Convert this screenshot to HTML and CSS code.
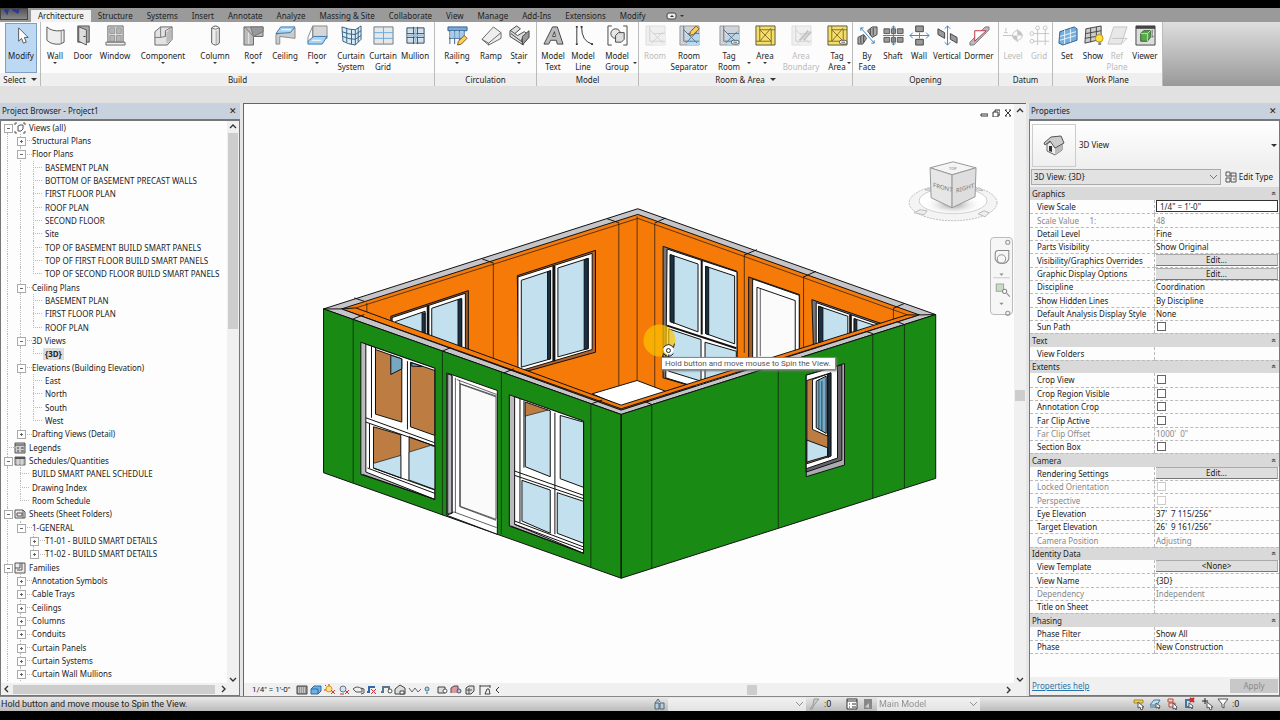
FILE: index.html
```html
<!DOCTYPE html>
<html lang="en">
<head>
<meta charset="utf-8">
<title>Project1 - 3D View</title>
<link rel="stylesheet" href="styles.css">
</head>
<body>
<svg class="defs" aria-hidden="true">
  <symbol id="area" viewBox="0 0 22 22"><path d="M1 1h20v20H1z" fill="#f7de62" stroke="#555"/><path d="M5 5l12 12M17 3L5 17M1 17h16v4M5 1v16M17 5h4M5 5h12v12" stroke="#7d6e35" fill="none"/></symbol>
  <symbol id="room" viewBox="0 0 22 22"><path d="M1 1h20v20H1z" fill="#d0d3da" stroke="#999"/><path d="M9 9h12v12H9z" fill="#b5daef"/><path d="M5 1v16h16M9 9h12M5 5l14 14M19 7L7 19" stroke="#5d7388" fill="none"/></symbol>
  <symbol id="pencil" viewBox="0 0 12 12"><path d="M1 11l1-4 6-6 3 3-6 6z" fill="#ffcf58" stroke="#77551d"/></symbol>
  <symbol id="tag" viewBox="0 0 10 6"><rect x="1" y="1" width="8" height="4" rx="2" fill="#fff" stroke="#555"/><path d="M3 3h4" stroke="#555"/></symbol>
  <symbol id="shaft" viewBox="0 0 22 22"><path d="M1 4h6v5H1zM9 4h4v5H9zM15 4h6v5h-6zM1 13h6v5H1zM9 13h4v5H9zM15 13h6v5h-6z" fill="#999" stroke="#555"/><path d="M11 1v20M0 11h22M9 3l2-2 2 2M9 19l2 2 2-2" stroke="#3f83c5" fill="none"/></symbol>
  <symbol id="chev" viewBox="0 0 8 8"><path d="M1 5l3-3 3 3" fill="none" stroke="#333" stroke-width="1.4"/></symbol>
</svg>

<header class="ribbon">
  <nav class="tabs" aria-label="Ribbon tabs">
    <button class="app" aria-label="Application menu"><svg viewBox="0 0 27 12"><path d="M4 0l2 3 1-3M12 0l5 3 1-3" stroke="#2b3a99" stroke-width="3" fill="none"/></svg></button>
    <button class="on">Architecture</button><button>Structure</button><button>Systems</button><button>Insert</button><button>Annotate</button><button>Analyze</button><button>Massing &amp; Site</button><button>Collaborate</button><button>View</button><button>Manage</button><button>Add-Ins</button><button>Extensions</button><button>Modify</button>
    <button class="mini" aria-label="Minimize ribbon"><svg viewBox="0 0 20 8"><rect x="2" y="1" width="9" height="6" rx="2" fill="#eee" stroke="#444"/><path d="M5 5l2-2 2 2M15 3h4l-2 2z" fill="#333"/></svg></button>
  </nav>
  <div class="panels">
    <section class="panel sel">
      <div class="tools"><button class="t w36 pressed"><svg viewBox="0 0 22 22"><path d="M8 3v14l3-3 2 5 3-1-2-5h4z" fill="#fff" stroke="#555"/></svg>Modify</button></div>
      <h2>Select <i class="dd"></i></h2>
    </section>
    <section class="panel">
      <div class="tools">
        <button class="t w28"><svg viewBox="0 0 22 22"><path d="M2 2q5 5 15 4l3-1v13l-4 2Q7 21 2 16z" fill="#eee" stroke="#555"/><path d="M17 6v13" stroke="#888"/></svg>Wall<i class="dd"></i></button>
        <button class="t w28"><svg viewBox="0 0 22 22"><path d="M5 1h12v17H5z" fill="#aaa" stroke="#555"/><path d="M6 2l8 3v16l-8-4z" fill="#ddd" stroke="#555"/><path d="M11 12h2" stroke="#222"/></svg>Door</button>
        <button class="t w36"><svg viewBox="0 0 22 22"><path d="M3 1h16v17H3z" fill="#ddd" stroke="#666"/><path d="M5 3h5v6H5zM12 3h5v6h-5zM5 11h5v6H5zM12 11h5v6h-5z" fill="#b5b5b5" stroke="#999"/><path d="M1 18h20v3H1z" fill="#eee" stroke="#666"/></svg>Window</button>
        <button class="t w60"><svg viewBox="0 0 22 22"><path d="M2 7l6-5h12v13l-5 6H2z" fill="#e3e3e3" stroke="#666"/><path d="M8 2v11H2M8 13l5-1V6l7-4M13 6v6" fill="none" stroke="#777"/><path d="M14 8l5-5v12l-5 5z" fill="#bbb"/></svg>Component<i class="dd"></i></button>
        <button class="t w44"><svg viewBox="0 0 22 22"><path d="M7 3q4-4 8 0v16q-4 4-8 0z" fill="#eee" stroke="#555"/><path d="M7 3q4 3 8 0" fill="none" stroke="#777"/><path d="M12 6v14" stroke="#bbb" stroke-width="2"/></svg>Column<i class="dd"></i></button>
        <button class="t w32"><svg viewBox="0 0 22 22"><path d="M1 2h20v10H11v9H1z" fill="#bbb" stroke="#666"/><path d="M2 2l9 10M11 12l10-5V2H8z" fill="#999" stroke="#777"/><path d="M6 8v12" stroke="#eee"/></svg>Roof<i class="dd"></i></button>
        <button class="t w32"><svg viewBox="0 0 22 22"><path d="M1 10v10h4v-8l16 2V3z" fill="#ccc" stroke="#888"/><path d="M1 9l5-7h15l-5 6z" fill="#a8d3f2" stroke="#3c79ae"/><path d="M7 5h10" stroke="#fff"/></svg>Ceiling</button>
        <button class="t w32"><svg viewBox="0 0 22 22"><path d="M6 1h15v13H6z" fill="#d6d6d6" stroke="#888"/><path d="M6 1L1 13v5M6 1v12" fill="none" stroke="#888"/><path d="M1 17l6-5h14l-5 8H1z" fill="#a8d3f2" stroke="#3c79ae"/><path d="M5 16h10" stroke="#fff"/></svg>Floor<i class="dd"></i></button>
        <button class="t w36"><svg viewBox="0 0 22 22"><path d="M1 2q7 3 14 3l6-4v14l-6 6Q7 20 2 17z" fill="#d8ebf7" stroke="#35607f"/><path d="M1 7q7 3 14 3l6-4M2 12q6 3 13 3l6-4M6 3v15M11 5v15M15 5v16M18 3v15" fill="none" stroke="#35607f"/></svg>Curtain<br>System</button>
        <button class="t w28"><svg viewBox="0 0 22 22"><path d="M1 2h20v18H1z" fill="#e2e8ec" stroke="#777"/><path d="M11 2v18M1 8h20M1 14h20" stroke="#6fa9d4"/></svg>Curtain<br>Grid</button>
        <button class="t w36"><svg viewBox="0 0 22 22"><path d="M2 3h7v5H2zM13 3h7v5h-7zM2 14h7v5H2zM13 14h7v5h-7z" fill="#d3dde4"/><path d="M2 3h18v16H2zM9 2v18M13 2v18M2 9h18M2 13h18" fill="none" stroke="#2c4c66"/><path d="M11 2v18M2 11h18" stroke="#8fc0e8" stroke-width="2"/></svg>Mullion</button>
      </div>
      <h2>Build</h2>
    </section>
    <section class="panel">
      <div class="tools">
        <button class="t w44"><svg viewBox="0 0 22 22"><path d="M1 2h20v4H1zM3 6v14M8 6v14M13 6v10M18 6v6M2 14h14" fill="#79a9d6" stroke="#315f8d"/><path d="M4 7h14v7H4z" fill="#86b5df" opacity=".7"/><use href="#pencil" x="10" y="10" width="12" height="12"/></svg>Railing<i class="dd"></i></button>
        <button class="t w24"><svg viewBox="0 0 22 22"><path d="M1 15L13 2l8 6v6L8 21z" fill="#eee" stroke="#666"/><path d="M1 15l7 4 13-11M8 19v2" fill="none" stroke="#666"/></svg>Ramp</button>
        <button class="t w32"><svg viewBox="0 0 22 22"><path d="M1 6l7-5 4 3-6 5 3 2 7-4 4 3-7 5 2 6L1 12z" fill="#ddd" stroke="#444"/><path d="M14 21l7-8V6l-7 6z" fill="#999" stroke="#444"/><path d="M2 9l12 9M2 6l4 3" stroke="#444"/></svg>Stair<i class="dd"></i></button>
      </div>
      <h2>Circulation</h2>
    </section>
    <section class="panel">
      <div class="tools">
        <button class="t w32"><svg viewBox="0 0 22 22"><path d="M1 20L10 2h5l6 18h-6l-1-4H8l-2 4z" fill="#bbb" stroke="#444"/><path d="M10 12l2-5 1 5z" fill="#fff" stroke="#444"/></svg>Model<br>Text</button>
        <button class="t w28"><svg viewBox="0 0 22 22"><path d="M4 3v16M9 2q0 15 11 18" fill="none" stroke="#333"/><path d="M3 2h2M3 20h2M8 2h2M19 20h2" stroke="#333" stroke-width="2"/></svg>Model<br>Line</button>
        <button class="t w40"><svg viewBox="0 0 22 22"><path d="M5 1H1v20h4M17 1h4v20h-4" fill="none" stroke="#444"/><circle cx="9" cy="9" r="5" fill="#e6e6e6" stroke="#444"/><path d="M9 11l3-3h6v7l-3 3H9z" fill="#ddd" stroke="#444"/></svg>Model<br>Group<i class="dd side"></i></button>
      </div>
      <h2>Model</h2>
    </section>
    <section class="panel">
      <div class="tools">
        <button class="t w32" disabled><svg viewBox="0 0 22 22"><use href="#room"/></svg>Room</button>
        <button class="t w36"><svg viewBox="0 0 22 22"><use href="#room"/><use href="#pencil" x="10" y="0" width="12" height="12"/></svg>Room<br>Separator</button>
        <button class="t w44"><svg viewBox="0 0 22 22"><use href="#room"/><use href="#tag" x="12" y="15" width="10" height="6"/></svg>Tag<br>Room<i class="dd side"></i></button>
        <button class="t w28"><svg viewBox="0 0 22 22"><use href="#area"/></svg>Area<i class="dd"></i></button>
        <button class="t w44" disabled><svg viewBox="0 0 22 22"><use href="#room"/><path d="M9 16l9-10M13 16l8-9" stroke="#444" stroke-width="2"/></svg>Area<br>Boundary</button>
        <button class="t w28"><svg viewBox="0 0 22 22"><use href="#area"/><use href="#tag" x="12" y="15" width="10" height="6"/></svg>Tag<br>Area<i class="dd side"></i></button>
      </div>
      <h2>Room &amp; Area <i class="dd"></i></h2>
    </section>
    <section class="panel">
      <div class="tools">
        <button class="t w28"><svg viewBox="0 0 22 22"><path d="M11 6l5-4h5v8l-5 3zM1 13l6-3 3 4-4 6H1z" fill="#aaa" stroke="#444"/><path d="M14 4v7M17 3v8M4 12v7M7 11v7" stroke="#444"/><path d="M4 3l14 16M4 6V3h3M18 16v3h-3" stroke="#3f83c5" fill="none"/></svg>By<br>Face</button>
        <button class="t w24"><svg viewBox="0 0 22 22"><use href="#shaft"/></svg>Shaft</button>
        <button class="t w28"><svg viewBox="0 0 22 22"><path d="M7 1h8v6H7zM7 15h8v6H7z" fill="#999" stroke="#444"/><path d="M1 11h20M4 8l-3 3 3 3M18 8l3 3-3 3M11 8v6" stroke="#3f83c5" fill="none"/></svg>Wall</button>
        <button class="t w28"><svg viewBox="0 0 22 22"><path d="M1 4l7 4v6l-7-4zM14 9l7 4v6l-7-4z" fill="#999" stroke="#444"/><path d="M11 1v20M8 4l3-3 3 3M8 18l3 3 3-3" stroke="#3f83c5" fill="none"/></svg>Vertical</button>
        <button class="t w36"><svg viewBox="0 0 22 22"><path d="M1 18L17 2h4v3L5 21H1z" fill="#bbb" stroke="#777"/><path d="M6 6h12L6 17z" fill="#fff" stroke="#b34"/></svg>Dormer</button>
      </div>
      <h2>Opening</h2>
    </section>
    <section class="panel">
      <div class="tools">
        <button class="t w28" disabled><svg viewBox="0 0 22 22"><path d="M0 11h21M15 4v14M3 7v-4M1 8h4" stroke="#444"/><circle cx="15" cy="11" r="5" fill="#fff" stroke="#444"/><path d="M15 6v5h5a5 5 0 0 0-5-5M15 16v-5h-5a5 5 0 0 0 5 5" fill="#444"/></svg>Level</button>
        <button class="t w24" disabled><svg viewBox="0 0 22 22"><path d="M9 4v17M17 4v17M4 9h17M4 17h17" stroke="#444"/><g fill="#fff" stroke="#444"><circle cx="9" cy="3" r="2"/><circle cx="17" cy="3" r="2"/><circle cx="3" cy="9" r="2"/><circle cx="3" cy="17" r="2"/></g></svg>Grid</button>
      </div>
      <h2>Datum</h2>
    </section>
    <section class="panel">
      <div class="tools">
        <button class="t w28"><svg viewBox="0 0 22 22"><path d="M3 7l15-5 3 2v12L6 21l-4-2z" fill="#75b0e0" stroke="#315f8d"/><path d="M3 12l17-5M3 16l17-5M8 5v15M14 4v14" stroke="#e8f4fc"/></svg>Set</button>
        <button class="t w24"><svg viewBox="0 0 22 22"><path d="M3 4l16-3v14L2 19z" fill="#ccc" stroke="#444"/><path d="M3 9l16-3M2 14l17-3M8 3v15M14 2v14" stroke="#444"/><circle cx="17" cy="14" r="4" fill="#ffe13e" stroke="#b88b15"/><path d="M16 18h3v3h-3z" fill="#888"/></svg>Show</button>
        <button class="t w24" disabled><svg viewBox="0 0 22 22"><path d="M7 2h14l-6 18H1z" fill="#bbb" stroke="#444"/><path d="M5 14h16M15 20l6-6" stroke="#444"/></svg>Ref<br>Plane</button>
        <button class="t w32"><svg viewBox="0 0 22 22"><path d="M1 1h20v20H1z" fill="#ddd" stroke="#444"/><path d="M1 1h20v3H1z" fill="#444"/><path d="M6 9l3-3h7v7l-3 4H6z" fill="#59a94a" stroke="#2d5f27"/><path d="M6 9h7v8M13 9l3-3" fill="none" stroke="#b8e3ad"/><path d="M18 5v8l2-2" fill="#fff" stroke="#666"/></svg>Viewer</button>
      </div>
      <h2>Work Plane</h2>
    </section>
    <div class="rest"></div>
  </div>
</header>

<main>
  <aside class="browser">
    <div class="head"><h1>Project Browser - Project1</h1><button aria-label="Close">✕</button></div>
    <div class="frame">
      <div class="cols">
      <ul class="tree">
        <li><button class="m f"></button><svg viewBox="0 0 12 12"><path d="M3 1H1v2M9 1h2v2M3 11H1V9M9 11h2V9" fill="none" stroke="#555"/><path d="M4 4l2-1h3v4l-2 2H4z" fill="none" stroke="#555"/></svg>Views (all)</li>
        <li><i class="v"></i><button class="p"></button><b></b>Structural Plans</li>
        <li><i class="v"></i><button class="m"></button><b></b>Floor Plans</li>
        <li><i class="v"></i><i class="v"></i><i class="t"></i>BASEMENT PLAN</li>
        <li><i class="v"></i><i class="v"></i><i class="t"></i>BOTTOM OF BASEMENT PRECAST WALLS</li>
        <li><i class="v"></i><i class="v"></i><i class="t"></i>FIRST FLOOR PLAN</li>
        <li><i class="v"></i><i class="v"></i><i class="t"></i>ROOF PLAN</li>
        <li><i class="v"></i><i class="v"></i><i class="t"></i>SECOND FLOOR</li>
        <li><i class="v"></i><i class="v"></i><i class="t"></i>Site</li>
        <li><i class="v"></i><i class="v"></i><i class="t"></i>TOP OF BASEMENT BUILD SMART PANELS</li>
        <li><i class="v"></i><i class="v"></i><i class="t"></i>TOP OF FIRST FLOOR BUILD SMART PANELS</li>
        <li><i class="v"></i><i class="v"></i><i class="l"></i>TOP OF SECOND FLOOR BUILD SMART PANELS</li>
        <li><i class="v"></i><button class="m"></button><b></b>Ceiling Plans</li>
        <li><i class="v"></i><i class="v"></i><i class="t"></i>BASEMENT PLAN</li>
        <li><i class="v"></i><i class="v"></i><i class="t"></i>FIRST FLOOR PLAN</li>
        <li><i class="v"></i><i class="v"></i><i class="l"></i>ROOF PLAN</li>
        <li><i class="v"></i><button class="m"></button><b></b>3D Views</li>
        <li><i class="v"></i><i class="v"></i><i class="l"></i><strong>{3D}</strong></li>
        <li><i class="v"></i><button class="m"></button><b></b>Elevations (Building Elevation)</li>
        <li><i class="v"></i><i class="v"></i><i class="t"></i>East</li>
        <li><i class="v"></i><i class="v"></i><i class="t"></i>North</li>
        <li><i class="v"></i><i class="v"></i><i class="t"></i>South</li>
        <li><i class="v"></i><i class="v"></i><i class="l"></i>West</li>
        <li><i class="v"></i><button class="p last"></button><b></b>Drafting Views (Detail)</li>
        <li><i class="t"></i><svg viewBox="0 0 12 12"><path d="M1 1h10v10H1z" fill="#ccc" stroke="#555"/><path d="M1 3h10M3 6h2M7 6h3M3 9h2M7 9h3" stroke="#444"/></svg>Legends</li>
        <li><button class="m"></button><svg viewBox="0 0 12 12"><path d="M1 2h10v8H1z" fill="#bbb" stroke="#666"/><path d="M1 3h10" stroke="#555" stroke-width="2"/><path d="M4 4v6M8 4v6" stroke="#eee"/></svg>Schedules/Quantities</li>
        <li><i class="v"></i><i class="t"></i>BUILD SMART PANEL SCHEDULE</li>
        <li><i class="v"></i><i class="t"></i>Drawing Index</li>
        <li><i class="v"></i><i class="l"></i>Room Schedule</li>
        <li><button class="m"></button><svg viewBox="0 0 12 12"><path d="M1 2h8l2 2v6H1z" fill="#eee" stroke="#555"/><path d="M3 5h5v3H3zM9 2v8" fill="none" stroke="#555"/></svg>Sheets (Sheet Folders)</li>
        <li><i class="v"></i><button class="m last"></button><b></b>1-GENERAL</li>
        <li><i class="v"></i><i></i><button class="p"></button><b></b>T1-01 - BUILD SMART DETAILS</li>
        <li><i class="v"></i><i></i><button class="p last"></button><b></b>T1-02 - BUILD SMART DETAILS</li>
        <li><button class="m"></button><svg viewBox="0 0 12 12"><path d="M1 1h10v10H1z" fill="#eee" stroke="#555"/><path d="M1 6h5V1M8 1v7H3" fill="none" stroke="#555"/></svg>Families</li>
        <li><i class="v"></i><button class="p"></button><b></b>Annotation Symbols</li>
        <li><i class="v"></i><button class="p"></button><b></b>Cable Trays</li>
        <li><i class="v"></i><button class="p"></button><b></b>Ceilings</li>
        <li><i class="v"></i><button class="p"></button><b></b>Columns</li>
        <li><i class="v"></i><button class="p"></button><b></b>Conduits</li>
        <li><i class="v"></i><button class="p"></button><b></b>Curtain Panels</li>
        <li><i class="v"></i><button class="p"></button><b></b>Curtain Systems</li>
        <li><i class="v"></i><button class="p"></button><b></b>Curtain Wall Mullions</li>
      </ul>
      <div class="vbar"><svg viewBox="0 0 8 8"><use href="#chev"/></svg><span class="thumb"></span><svg class="down" viewBox="0 0 8 8"><use href="#chev"/></svg></div>
      </div>
      <div class="hbar"><svg class="left" viewBox="0 0 8 8"><use href="#chev"/></svg><span class="thumb"></span><svg class="right" viewBox="0 0 8 8"><use href="#chev"/></svg></div>
    </div>
  </aside>

  <section class="view">
    <div class="viewrow">
      <div class="canvas">
        <svg class="scene" viewBox="244 105 771 578" role="img" aria-label="3D model of the building">
          <defs><radialGradient id="sh"><stop offset="0" stop-color="#999"/><stop offset="1" stop-color="#fff" stop-opacity="0"/></radialGradient></defs>
          <g transform="translate(311 200) scale(.3333)" stroke="#111" stroke-width="3" stroke-linejoin="round">
            <path d="M38 328L982 27 1877 345 932 645z" fill="#c5c5c9"/>
            <path d="M92 328L982 44 1828 346 932 632z" fill="#f67a08"/>
            <path d="M845 583L980 543 1070 577 932 620z" fill="#fff"/>
            <path d="M135 325L982 56 1795 347M925 70V560M980 50V543M1033 72V563M548 190V500M168 310V345M1302 165V460M1480 230V450M1750 325V370" fill="none" stroke-width="2"/>
            <path d="M130 295L160 305M515 178L548 190M890 57L925 69M1065 55L1033 70M1340 150L1302 166M1517 215L1480 232M1782 312L1750 326" stroke-width="3"/>
            <!-- left inner wall windows -->
            <path d="M240 350L473 273V460L240 530z" fill="#9a5520"/>
            <path d="M244 354L464 281V450L244 520z" fill="#fff"/>
            <path d="M352 318V480" stroke-width="8"/>
            <path d="M254 366L343 335V500L254 515zM363 326L453 296V440L363 465z" fill="#c3e0ee"/>
            <path d="M334 340h9v90h-9zM442 300h11v140l-11 4z" fill="#173247"/>
            <path d="M620 228L855 152V458L625 522z" fill="#b2632b"/>
            <path d="M622 232L845 161V450L622 516z" fill="#fff"/>
            <path d="M730 198V485" stroke-width="9"/>
            <path d="M632 242L720 213V478L632 503zM742 205L833 176V447L742 472z" fill="#c3e0ee"/>
            <path d="M711 217L720 213V478L711 480zM821 180L833 176V447L821 450z" fill="#173247"/>
            <!-- right inner wall openings -->
            <g transform="translate(870 0)">
              <path d="M188 140L410 215V600L188 535z" fill="#77777b"/>
              <path d="M200 148L410 217V600L196 535z" fill="#fff"/>
              <path d="M304 182V405M200 378L408 446" stroke-width="6" fill="none"/>
              <path d="M210 165L293 193V397L210 366zM316 200L403 229V433L316 402zM205 388L302 420V545L205 515zM314 428L408 455V590L314 560z" fill="#c3e0ee"/>
              <path d="M209 165L221 169V371L209 366zM316 200L325 203V406L316 402z" fill="#173247"/>
              <path d="M445 232L598 285V480H445z" fill="#a65b23"/>
              <path d="M457 238L597 287V480H457z" fill="#fff"/>
              <path d="M470 263L585 303V480H470z" fill="#fbfbfb"/><path d="M480 268V470" stroke-width="2"/>
              <path d="M635 300L850 374V450H640z" fill="#77777b"/>
              <path d="M648 309L840 376V450H648z" fill="#fff"/>
              <path d="M655 320L743 350V440H655zM762 357L825 378V440H762z" fill="#c3e0ee"/>
              <path d="M655 320L668 324V440H655zM762 357L770 360V440H762z" fill="#173247"/><path d="M751 346V420" stroke-width="8"/>
            </g>
            <!-- front walls -->
            <path d="M92 328L932 628 1828 346 1790 346 932 617 135 325z" fill="#f67a08"/>
            <path d="M38 328L92 328 932 632 1828 346 1877 345 932 645z" fill="#c5c5c9"/>
            <path d="M38 328L932 645V1137L38 820zM932 645L1877 345V837L932 1137z" fill="#198b14"/>
            <path d="M127 358V850M395 455V948M572 520V1005M841 612V1105M1024 617V1107M1404 497V986M1688 402V896M1783 375V866" fill="none" stroke-width="2"/>
            <path d="M127 358L160 345M395 455L420 444M580 520L610 508M845 612L875 602M1024 615L1000 605M1688 402L1665 395M1783 375L1760 366"/>
            <!-- first front window -->
            <path d="M150 428L372 506V900L150 825z" fill="#bbbbbf"/>
            <path d="M165 434L372 506V900L165 818z" fill="#fff"/>
            <path d="M194 450L273 478V668L194 644zM299 488L372 513V708L299 682zM188 682L270 706V836L188 806zM295 712L372 740V870L295 842z" fill="#bd7d42"/>
            <path d="M188 792L270 768V836L188 806zM295 758L360 738 372 742V870L295 842z" fill="#c3e0ee" stroke-width="2"/>
            <path d="M240 467L273 478V508L240 525zM303 490L335 501 303 500z" fill="#76a8c2"/>
            <path d="M182 440V655M194 445V644M165 655L372 730M165 668L372 740M290 485V690M170 806L372 882M176 673V806M188 806L372 872M155 825L372 900" fill="none"/>
            <!-- front door -->
            <path d="M408 520L560 573V1005L408 948z" fill="#fff"/>
            <path d="M411 523L424 528V942L411 946z" fill="#bbbbbf"/>
            <path d="M434 535V940M447 543V922L556 963M438 540L558 585M447 552L558 590M410 944L430 938 558 985M424 528V942" fill="none" stroke-width="2"/>
            <path d="M449 554L556 592V960L449 921z" fill="#fafafa" stroke-width="2"/>
            <!-- second front window -->
            <path d="M596 586L819 665V1062L596 980z" fill="#bbbbbf"/>
            <path d="M612 592L819 665V1062L612 975z" fill="#fff"/>
            <path d="M644 608L719 634V832L644 802zM749 648L819 668V864L749 838zM634 843L719 872V1002L634 965zM740 880L819 906V1032L740 1002z" fill="#c3e0ee"/>
            <path d="M644 608L712 632 644 650z" fill="#bd7d42" stroke-width="2"/>
            <path d="M628 598V970M640 604V805M612 815L819 888M612 828L819 898M733 640V1005M612 965L819 1043M612 975L819 1052M600 980L819 1062" fill="none"/>
            <!-- side window -->
            <g transform="translate(870 0)">
              <path d="M618 527L733 492V797L618 832z" fill="#aaaab0"/>
              <path d="M618 527L725 496V782L618 818z" fill="#66666a"/>
              <path d="M618 527L712 500V776L618 808z" fill="#fff"/>
              <path d="M620 543L692 520V770L620 793z" fill="#bd7d42"/>
              <path d="M620 722L682 745V770L620 788z" fill="#c3e0ee"/>
              <path d="M637 540L682 524V710L637 690z" fill="#fff"/>
              <path d="M648 545L678 530V702L648 685z" fill="#72aaca"/>
              <path d="M656 540V690M665 545V695" stroke-width="2"/>
              <path d="M683 524L692 520V770L683 774z" fill="#173247"/>
            </g>
          </g>
          <circle cx="660" cy="341" r="16" fill="#fdc400" opacity=".7"/>
          <circle cx="669" cy="350" r="5" fill="#fff"/>
          <g fill="none" stroke="#222"><circle cx="669" cy="351" r="2"/><path d="M664 348q5-6 10 0l1-4M674 354q-5 6-10 0l-1 4"/></g>
          <!-- view cube -->
          <ellipse cx="954" cy="203" rx="44" ry="18" fill="#f4f4f4" stroke="#bbb" stroke-dasharray="2 1"/>
          <ellipse cx="954" cy="201" rx="34" ry="13" fill="#fff" stroke="#ccc"/>
          <ellipse cx="954" cy="205" rx="30" ry="11" fill="url(#sh)"/>
          <g fill="#eee" stroke="#bbb"><path d="M915 213l6-3 7 1-3 4zM979 214l6-3 5 2-4 4zM926 190l6-2 2 3zM976 190l4-2 4 3z"/></g>
          <g stroke="#999" stroke-linejoin="round"><path d="M931 168L954 162 977 168 953 175z" fill="#f4f4f4"/><path d="M931 168L953 175V208L932 198z" fill="#e6e6e6"/><path d="M953 175L977 168 976 197 953 208z" fill="#dedede"/></g>
          <text class="cube" transform="translate(934 187) skewY(16)">FRONT</text>
          <text class="cube" transform="translate(957 193) skewY(-16)">RIGHT</text>
          <text class="cube top" x="950" y="170">TOP</text>
        </svg>
        <div class="winbtns"><button aria-label="Minimize"><svg viewBox="0 0 8 8"><path d="M1 5h7v2H1z" fill="none" stroke="#333"/></svg></button><button aria-label="Restore"><svg viewBox="0 0 8 8"><path d="M1 3h5v5H1zM3 3V1h5v5H6" fill="none" stroke="#333"/></svg></button><button aria-label="Close view"><svg viewBox="0 0 8 8"><path d="M1 1l6 6M7 1L1 7M1 1h2M5 1h2M1 7h2M5 7h2" fill="none" stroke="#333"/></svg></button></div>
        <div class="navbar">
          <svg viewBox="0 0 22 78"><g fill="none" stroke="#999"><circle cx="17" cy="5" r="2"/><circle cx="17" cy="73" r="2"/><path d="M5 16q0-3 3-3h10v8a7 7 0 0 1-13 0z" stroke="#888"/><circle cx="11" cy="21" r="4"/><path d="M3 39h16" stroke="#ccc"/></g><path d="M9 35h4l-2 2zM9 63h4l-2 2z" fill="#888"/><path d="M6 45h7v7H6z" fill="#c9dcc4" stroke="#9a9"/><circle cx="14" cy="52" r="2" fill="#fff" stroke="#888"/><path d="M16 54l3 3" stroke="#888"/></svg>
        </div>
        <div class="tip" role="tooltip">Hold button and move mouse to Spin the View.</div>
      </div>
      <div class="vbar big"><svg viewBox="0 0 8 8"><use href="#chev"/></svg><span class="thumb"></span><svg class="down" viewBox="0 0 8 8"><use href="#chev"/></svg></div>
    </div>
    <div class="viewctl">
      <span class="scale">1/4" = 1'-0"</span>
      <svg class="vicons" viewBox="0 0 206 12">
        <path d="M1 2h10v8H1z" fill="#999" stroke="#444"/><path d="M2 4h8M2 6h8M2 8h8" stroke="#eee" stroke-dasharray="1 1"/>
        <path d="M15 5l3-3h7v5l-3 3h-7z" fill="#6fb1e5" stroke="#2d6a9c"/><path d="M15 5h7v5" fill="none" stroke="#2d6a9c"/>
        <circle cx="33" cy="5" r="3" fill="#ffe08a" stroke="#d99a1c"/><path d="M29 1l1 1M33 0v2M28 6h2M35 6l4 4M39 6l-4 4" stroke="#c33"/>
        <circle cx="47" cy="5" r="3" fill="#cfe3f3" stroke="#678"/><path d="M44 10h4M49 6l4 4M53 6l-4 4" stroke="#c33"/>
        <path d="M57 5q4-4 9 0v3h-6zM65 4l3 1v4l-3 1" fill="#eee" stroke="#555"/>
        <path d="M71 8h2V3h6" fill="none" stroke="#36a" stroke-width="2"/><path d="M75 5l5 5M80 5l-5 5" stroke="#c33"/>
        <path d="M85 8h2V3h6v6" fill="none" stroke="#578" stroke-width="2"/><circle cx="94" cy="7" r="2" fill="#fff" stroke="#555"/>
        <path d="M99 5l5-4 5 3v6H99z" fill="#ddd" stroke="#444"/><path d="M104 7h4v3h-4z" fill="#fff" stroke="#444"/>
        <path d="M113 4l3 4 3-4 3 4 3-3" fill="none" stroke="#666"/>
        <circle cx="131" cy="5" r="2" fill="#a9d4f5" stroke="#478"/><path d="M130 9h2" stroke="#555"/>
        <path d="M142 3h7v6h-7z" fill="#ddd" stroke="#444"/><circle cx="149" cy="7" r="2" fill="#fff" stroke="#555"/>
        <path d="M155 9V4l3-2h4v7" fill="#d99" stroke="#546"/><circle cx="163" cy="7" r="2" fill="#bcd" stroke="#456"/>
        <path d="M170 4l3-2h5v5l-3 3h-5z" fill="#ddd" stroke="#444"/><path d="M173 4v6M170 6h6" stroke="#555"/>
        <path d="M184 1v10M184 2h10M194 1v3M189 10l2-5h2l1 5z" fill="none" stroke="#444"/>
        <path d="M203 3l-3 3 3 3" fill="none" stroke="#333"/>
      </svg>
      <div class="htrack"><span class="thumb"></span><svg class="right" viewBox="0 0 8 8"><use href="#chev"/></svg></div>
    </div>
  </section>

  <aside class="props">
    <div class="head"><h1>Properties</h1><button aria-label="Close">✕</button></div>
    <div class="frame">
      <button class="type"><span class="thumbbox"><svg viewBox="0 0 22 22"><path d="M4 10v7l8 4 7-5V9l-9-3z" fill="#eee" stroke="#666"/><path d="M12 21v-8l7-4v7z" fill="#bbb"/><path d="M1 9l7-6 10-1 3 7-9 5-5-7-5 4z" fill="#ccc" stroke="#555"/><path d="M6 12h3v6l-3-1z" fill="#333"/></svg></span>3D View<i class="dd"></i></button>
      <div class="pick">
        <select aria-label="Element filter"><option>3D View: {3D}</option></select>
        <button class="edit"><svg viewBox="0 0 12 12"><path d="M1 1h4v4H1zM1 7h4v4H1zM6 2h5v9H6zM6 5h5M8 8h2" fill="none" stroke="#555"/></svg>Edit Type</button>
      </div>
      <table>
        <tbody>
        <tr class="g"><th colspan="2">Graphics<span>»</span></th></tr>
        <tr><th><label for="vs">View Scale</label></th><td><input id="vs" class="scalebox" value="1/4&quot; = 1'-0&quot;"></td></tr>
        <tr class="x"><th>Scale Value &nbsp; &nbsp; 1:</th><td>48</td></tr>
        <tr><th>Detail Level</th><td>Fine</td></tr>
        <tr><th>Parts Visibility</th><td>Show Original</td></tr>
        <tr><th>Visibility/Graphics Overrides</th><td><button>Edit...</button></td></tr>
        <tr><th>Graphic Display Options</th><td><button>Edit...</button></td></tr>
        <tr><th>Discipline</th><td>Coordination</td></tr>
        <tr><th>Show Hidden Lines</th><td>By Discipline</td></tr>
        <tr><th>Default Analysis Display Style</th><td>None</td></tr>
        <tr><th><label for="c1">Sun Path</label></th><td><input type="checkbox" id="c1"></td></tr>
        <tr class="g"><th colspan="2">Text<span>»</span></th></tr>
        <tr><th>View Folders</th><td></td></tr>
        <tr class="g"><th colspan="2">Extents<span>»</span></th></tr>
        <tr><th><label for="c2">Crop View</label></th><td><input type="checkbox" id="c2"></td></tr>
        <tr><th><label for="c3">Crop Region Visible</label></th><td><input type="checkbox" id="c3"></td></tr>
        <tr><th><label for="c4">Annotation Crop</label></th><td><input type="checkbox" id="c4"></td></tr>
        <tr><th><label for="c5">Far Clip Active</label></th><td><input type="checkbox" id="c5"></td></tr>
        <tr class="x"><th>Far Clip Offset</th><td>1000' &nbsp;0"</td></tr>
        <tr><th><label for="c6">Section Box</label></th><td><input type="checkbox" id="c6"></td></tr>
        <tr class="g"><th colspan="2">Camera<span>»</span></th></tr>
        <tr><th>Rendering Settings</th><td><button>Edit...</button></td></tr>
        <tr class="x"><th><label for="c7">Locked Orientation</label></th><td><input type="checkbox" id="c7" disabled></td></tr>
        <tr class="x"><th><label for="c8">Perspective</label></th><td><input type="checkbox" id="c8" disabled></td></tr>
        <tr><th>Eye Elevation</th><td>37' &nbsp;7 115/256"</td></tr>
        <tr><th>Target Elevation</th><td>26' &nbsp;9 161/256"</td></tr>
        <tr class="x"><th>Camera Position</th><td>Adjusting</td></tr>
        <tr class="g"><th colspan="2">Identity Data<span>»</span></th></tr>
        <tr><th>View Template</th><td><button>&lt;None&gt;</button></td></tr>
        <tr><th>View Name</th><td>{3D}</td></tr>
        <tr class="x"><th>Dependency</th><td>Independent</td></tr>
        <tr><th>Title on Sheet</th><td></td></tr>
        <tr class="g"><th colspan="2">Phasing<span>»</span></th></tr>
        <tr><th>Phase Filter</th><td>Show All</td></tr>
        <tr><th>Phase</th><td>New Construction</td></tr>
        </tbody>
      </table>
      <div class="foot"><a href="#help">Properties help</a><button disabled>Apply</button></div>
    </div>
  </aside>
</main>

<footer class="status">
  <span class="msg">Hold button and move mouse to Spin the View.</span>
  <div class="mid">
    <svg class="i14" viewBox="0 0 14 12"><path d="M3 5l3-4 2 3M8 5h4v6H8zM3 5h4v6H3z" fill="#bcd" stroke="#4a6a70"/></svg>
    <select class="ws" aria-label="Active workset" disabled><option></option></select>
    <svg class="i14" viewBox="0 0 14 12"><path d="M6 1h5l-5 6-2 4H2l3-4z" fill="#ccc" stroke="#999"/></svg>
    <span class="zero">:0</span>
    <svg class="i14" viewBox="0 0 14 12"><path d="M2 1h10v10H2zM2 3h10M4 6h1M7 6h4M4 9h1M7 9h4" fill="#fff" stroke="#333"/></svg>
    <svg class="i14" viewBox="0 0 14 12"><path d="M3 1h8v10H3z" fill="#888"/><path d="M4 9l4-4v5" fill="#ccc"/></svg>
    <select class="mm" aria-label="Design option" disabled><option>Main Model</option></select>
  </div>
  <div class="end">
    <svg class="i106" viewBox="0 0 100 14">
      <path d="M2 3h9v3H2z" fill="#f2d34f" stroke="#a58a1e"/>
      <path d="M18 8l4-5h6l-3 5zM18 10h8" fill="#bfe0f5" stroke="#47789c"/>
      <path d="M36 2h5v3h-5zM37 6h6v4h-6z" fill="#f6d5cf" stroke="#b34a3c"/>
      <path d="M60 10h-6V3h4" fill="none" stroke="#3c78ad" stroke-width="2"/><path d="M58 1l4 4M62 1l-4 4" stroke="#c22" stroke-width="2"/>
      <path d="M73 1v6M70 4h6" stroke="#222"/>
      <g fill="#fff" stroke="#555"><path d="M6 5v6l2-1 1 3 2-1-1-2h2zM24 6v5l2-1 1 2 1-3zM41 6v6l2-1 1 2 1-3zM57 6v5l2-1 1 2 1-3zM75 5v6l2-1 1 3 2-1-1-2h2z"/><path d="M86 2h10l-4 5v4l-2-1V7z"/></g>
    </svg><span class="zero">:0</span>
  </div>
</footer>
</body>
</html>
```
FILE: styles.css
```css
*{box-sizing:border-box}
body{margin:0;min-height:100vh;display:flex;flex-direction:column;padding:8px 0 9px;background:#000;font:8px/12px "Noto Sans","Open Sans",sans-serif;color:#222}
button,input,select{font:inherit;color:inherit;margin:0;padding:0;border:0;background:none;border-radius:0}
h1,h2{margin:0;font-weight:400;font-size:8px}
.defs{position:absolute;width:0;height:0}
svg{display:block;flex:none}

/* ribbon */
.ribbon{background:#e1e1e1;padding-bottom:17px}
.tabs{display:flex;height:14px;background:#9a9a9a}
.tabs button{height:12px;margin-top:2px;padding:0 7px;line-height:12px}
.tabs .app{width:28px;height:12px;margin:0 3px 0 0;padding:0;background:linear-gradient(#555,#888);border:1px solid #444}
.tabs .on{background:#f1f1f1}
.tabs .mini{padding:0;margin-left:12px}
.mini svg{width:20px;height:8px}
.panels{display:flex;height:64px}
.panel{display:flex;flex-direction:column;border-right:1px solid #bbb;background:#fcfcfd;flex:none}
.tools{display:flex;flex:1;padding:1px 1px 0 0}
.panel h2{height:13px;line-height:13px;background:#efefef;text-align:center}
.panel h2 .dd{display:inline-block;vertical-align:2px;margin-left:3px;border-width:3px 3px 0}
.sel .tools{padding:1px 3px 0 5px}
.t{position:relative;display:flex;flex-direction:column;align-items:center;line-height:11px;white-space:nowrap;padding-top:2px}
.t svg{width:21px;height:21px;margin-bottom:4px}
.t:disabled{color:#bbb}
.t:disabled svg{opacity:.3;filter:grayscale(1)}
.t .dd{margin-top:1px}
.t .side{position:absolute;right:0;bottom:9px}
.pressed{background:#bcd8f3;border:1px solid #7d9fc4;padding-top:1px}
.dd{width:0;height:0;border:solid transparent;border-width:2px 2px 0;border-top-color:#333}
.w24{width:24px}.w28{width:28px}.w32{width:32px}.w36{width:36px}.w40{width:40px}.w44{width:44px}.w60{width:60px}
.sel .w36{width:32px}
.rest{flex:1;background:linear-gradient(#dedede,#999)}

/* work area */
main{flex:1;display:flex;gap:3px;background:#e6e6e6;min-height:0}
.head{display:flex;justify-content:space-between;align-items:center;height:16px;padding:0 3px 0 2px;background:#c8d2de}
.head button{font-size:9px;line-height:12px}
.frame{flex:1;display:flex;flex-direction:column;border:1px solid #777;border-top-width:2px;background:#fdfdfe}
.browser{width:240px;flex:none;display:flex;flex-direction:column}
.cols{flex:1;display:flex}
.tree{list-style:none;margin:0;padding:0;flex:1;width:0;overflow:hidden}
.tree li{display:flex;align-items:center;height:13px;white-space:nowrap}
.tree li:nth-child(3n){height:14px}
.tree i,.tree button{position:relative;flex:none;width:13px;align-self:stretch}
.tree i.v::before,.tree i.t::before,.tree button::before{content:"";position:absolute;left:6px;top:0;bottom:0;border-left:1px dotted #bbb}
.tree i.l::before{content:"";position:absolute;left:6px;top:0;height:7px;border-left:1px dotted #bbb}
.tree .f::before{top:7px}
.tree .last::before{bottom:7px}
.tree i.t::after,.tree i.l::after{content:"";position:absolute;left:6px;top:6px;width:9px;border-top:1px dotted #bbb}
.tree i.t,.tree i.l{margin-right:5px}
.tree i.t+svg{margin-left:-5px}
.tree button::after{content:"";position:absolute;left:3px;top:3px;width:7px;height:7px;border:1px solid #aaa;background:linear-gradient(#666,#666) center/3px 1px no-repeat,#fff}
.tree button.p::after{background:linear-gradient(#666,#666) center/3px 1px no-repeat,linear-gradient(#666,#666) center/1px 3px no-repeat,#fff}
.tree b{width:5px;border-top:1px dotted #bbb}
.tree svg{width:12px;height:12px;margin-right:3px}
.tree strong{background:#dcdcdc;padding:0 2px;margin-left:-2px;line-height:12px}
.vbar{width:12px;flex:none;display:flex;flex-direction:column;align-items:center;background:#f0f0f0;padding:2px 0 0}
.vbar svg,.hbar svg,.htrack svg{width:8px;height:8px}
.vbar .thumb{width:10px;height:196px;margin-top:2px;background:#cdcdcd}
.down{transform:rotate(180deg)}.left{transform:rotate(-90deg)}.right{transform:rotate(90deg)}
.vbar .down{margin-top:auto}
.hbar{height:12px;display:flex;align-items:center;background:#f0f0f0;padding:0 12px 0 2px;gap:2px}
.hbar .thumb{flex:1;height:9px;background:#cdcdcd;margin-right:2px}

/* drawing view */
.view{flex:1;display:flex;flex-direction:column;border-top:1px solid #666;border-left:1px solid #666;background:#fdfdfe;min-width:0}
.viewrow{flex:1;display:flex;min-height:0}
.canvas{flex:1;position:relative;min-width:0}
.scene{width:100%;height:100%;position:absolute;left:0;top:0}
.cube{font-size:6px;fill:#777}
.top{font-size:4px}
.winbtns{position:absolute;right:2px;top:5px;display:flex;gap:4px}
.winbtns svg{width:8px;height:8px}
.navbar{position:absolute;right:1px;top:133px;width:23px;height:78px;border:1px solid #bbb;border-radius:4px;background:#f6f6f6}
.navbar svg{margin:-1px}
.tip{position:absolute;left:417px;top:253px;padding:0 4px 0 3px;border:1px solid #888;background:#fff;line-height:11px;box-shadow:1px 1px 2px #777;white-space:nowrap;color:#555;font-family:Roboto,sans-serif}
.big{padding-top:3px}
.big .thumb{height:11px;margin-top:auto}
.viewctl{height:13px;display:flex;align-items:center;background:#f0f0f0;padding:0 5px 0 8px}
.scale{width:44px;font-family:Roboto,sans-serif}
.vicons{width:206px;height:12px}
.htrack{flex:1;display:flex;justify-content:flex-end;align-items:center}
.htrack .thumb{width:10px;height:10px;background:#cdcdcd;margin-right:247px}
.htrack .right{margin-right:9px}

/* properties */
.props{width:251px;flex:none;display:flex;flex-direction:column}
.type{display:flex;align-items:center;gap:3px;height:48px;padding:2px 2px 2px 2px;text-align:left;background:linear-gradient(#fff,#eee)}
.thumbbox{width:44px;height:43px;display:grid;place-items:center;border:1px solid #ccc}
.thumbbox svg{width:22px;height:22px}
.type .dd{margin-left:auto;border-width:3px 3px 0}
.pick{display:flex;height:18px;background:#f0f0f0;padding:0 2px 0 1px;gap:4px}
.pick select,.status select{appearance:none;border:1px solid #aaa;padding:0 2px;background:linear-gradient(45deg,transparent 45%,#777 45% 60%,transparent 60%) right 6px center/4px 4px no-repeat,linear-gradient(-45deg,transparent 45%,#777 45% 60%,transparent 60%) right 3px center/4px 4px no-repeat,#e2e2e2}
.pick select{flex:1;height:16px}
.edit{display:flex;align-items:center;gap:2px;height:16px;padding-right:4px}
.edit svg{width:12px;height:12px}
table{border-collapse:collapse;table-layout:fixed;width:100%}
tr{height:13px}
tr:nth-child(3n){height:14px}
th,td{padding:0 0 0 7px;font-weight:400;text-align:left;line-height:11px;border-bottom:1px dashed #bbb;white-space:nowrap;height:inherit}
td{padding:0 1px 0 1px;border-left:1px dashed #bbb}
.x{color:#888}
.g th{background:#d9d9d9;padding:0 5px 0 2px;border:0}
.g span{float:right;transform:rotate(-90deg)}
td button{display:block;width:100%;height:12px;line-height:10px;background:#dedede;border:1px solid #aaa;border-width:1px 1px 1px 0;border-bottom-color:#777}
.scalebox{display:block;width:100%;height:12px;border:1px solid #333;background:#fff;padding:0 3px}
input[type=checkbox]{appearance:none;display:block;width:9px;height:9px;margin-left:1px;border:1px solid #666;background:#fff}
input[type=checkbox]:disabled{border-color:#ccc}
.foot{margin-top:auto;display:flex;justify-content:space-between;align-items:center;height:18px;background:#f0f0f0;padding:0 1px 0 2px}
.foot a{color:#2a74ad}
.foot button{width:48px;height:14px;background:#c8c8c8;color:#888}

/* status bar */
.status{height:15px;display:flex;align-items:center;background:linear-gradient(#e8e8e8,#bbb);border-top:1px solid #888;font-family:Roboto,sans-serif;font-size:9px}
.msg{width:652px;padding-left:1px}
.mid{flex:1;display:flex;align-items:center;gap:2px}
.i14{width:14px;height:12px}
.zero{width:19px}
.status select{height:13px;background-color:#f6f6f6;border:0;color:#777;line-height:13px}
.ws{width:138px}.mm{width:103px}
.end{display:flex;align-items:center;padding-right:29px}
.i106{width:100px;height:14px}
```
